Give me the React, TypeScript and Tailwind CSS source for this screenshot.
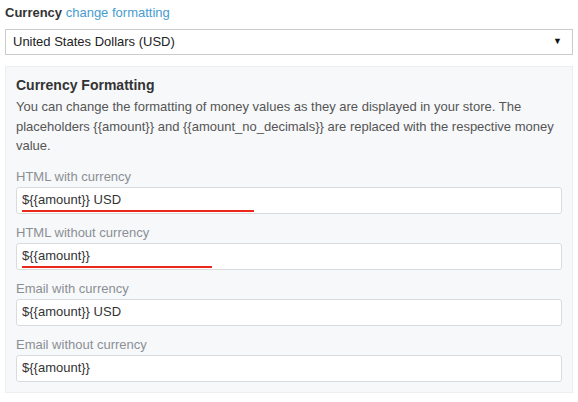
import React from "react";

const font = { fontFamily: '"Liberation Sans", Arial, sans-serif' };

function Field({ label, value, line }: { label: string; value: string; line?: number }) {
  return (
    <div className="flex flex-col">
      <div className="text-[13px] leading-[18px] text-[#8a8f95] h-[18px]">{label}</div>
      <div className="relative mt-[1px] h-[27px] border border-[#d9dbdd] rounded-[3px] bg-white flex items-center pl-[5px] text-[13px] text-[#333]">
        {value}
        {line ? (
          <span className="absolute left-[5px] top-[22px] h-[2px] bg-[#e8291c]" style={{ width: line }} />
        ) : null}
      </div>
    </div>
  );
}

const desc =
  "You can change the formatting of money values as they are displayed in your store. The placeholders {{amount}} and {{amount_no_decimals}} are replaced with the respective money value.";

export default function App() {
  return (
    <div className="w-[578px] h-[402px] bg-white pl-[5px] pr-[5px]" style={font}>
      <div className="pt-[4px] h-[29px] text-[13px] leading-[18px]">
        <span className="font-bold text-[#333]">Currency</span>{" "}
        <span className="text-[#479ccf]">change formatting</span>
      </div>
      <div className="h-[26px] border border-[#c9cbcd] flex items-center justify-between pl-[7px] pr-[10px] text-[13px] text-[#222]">
        <span>United States Dollars (USD)</span>
        <span className="text-[9px] text-[#111]">▼</span>
      </div>
      <div className="mt-[11px] h-[327px] border border-[#eceef0] bg-[#f7f8fa] px-[10px] pt-[9px]">
        <div className="text-[14px] leading-[18px] font-bold text-[#333]">Currency Formatting</div>
        <p className="mt-[3px] text-[13px] leading-[19.5px] text-[#555]">{desc}</p>
        <div className="mt-[12px] flex flex-col gap-[10px]">
          <Field label="HTML with currency" value="${{amount}} USD" line={232} />
          <Field label="HTML without currency" value="${{amount}}" line={190} />
          <Field label="Email with currency" value="${{amount}} USD" />
          <Field label="Email without currency" value="${{amount}}" />
        </div>
      </div>
    </div>
  );
}
